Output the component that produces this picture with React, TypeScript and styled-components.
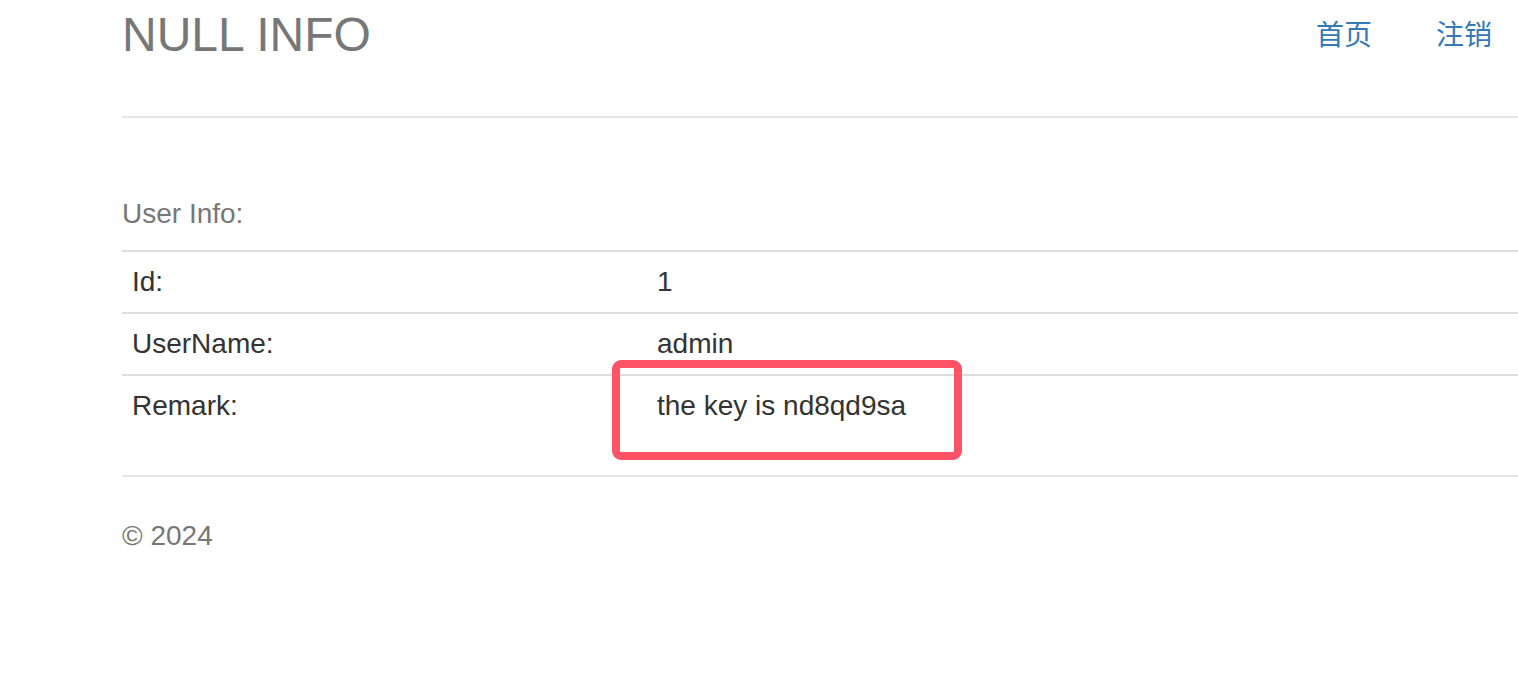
import React from "react";
import styled, { createGlobalStyle } from "styled-components";

const GlobalStyle = createGlobalStyle`
  html, body {
    margin: 0;
    padding: 0;
    background: #ffffff;
  }
  body {
    font-family: "Liberation Sans", Arial, "Noto Sans CJK SC", sans-serif;
    font-size: 28px;
    color: #333333;
  }
  * { box-sizing: border-box; }
`;

const Page = styled.div`
  position: relative;
  padding-left: 122px;
  width: 1518px;
`;

const Header = styled.header`
  display: flex;
  justify-content: space-between;
  align-items: flex-start;
  height: 118px;
  border-bottom: 2px solid #e5e5e5;
`;

const Title = styled.h1`
  margin: 0;
  padding-top: 7px;
  font-size: 48px;
  line-height: 56px;
  font-weight: 400;
  color: #777777;
`;

const Nav = styled.nav`
  display: flex;
  gap: 64px;
  padding-top: 16px;
  padding-right: 26px;
`;

const NavLink = styled.a`
  font-size: 28px;
  line-height: 40px;
  color: #337ab7;
  text-decoration: none;
  cursor: pointer;
`;

const Main = styled.main`
  padding-top: 80px;
`;

const SectionTitle = styled.p`
  margin: 0 0 20px;
  font-size: 28px;
  line-height: 32px;
  color: #777777;
`;

const Table = styled.table`
  width: 100%;
  border-collapse: collapse;
  margin-bottom: 39px;
`;

const Row = styled.tr`
  border-top: 2px solid #dddddd;
`;

const Cell = styled.td<{ $label?: boolean }>`
  padding: 14px 10px;
  line-height: 32px;
  font-size: 28px;
  color: #333333;
  vertical-align: top;
  text-align: left;
  width: ${(p) => (p.$label ? "525px" : "auto")};
`;

const Footer = styled.footer`
  border-top: 2px solid #e5e5e5;
  padding-top: 43px;
  font-size: 28px;
  line-height: 32px;
  color: #777777;
`;

const Highlight = styled.div`
  position: absolute;
  left: 612px;
  top: 360px;
  width: 350px;
  height: 100px;
  border: 8px solid #fe5266;
  border-radius: 9px;
  pointer-events: none;
`;

const rows = [
  { label: "Id:", value: "1" },
  { label: "UserName:", value: "admin" },
  { label: "Remark:", value: "the key is nd8qd9sa" },
];

export default function App() {
  return (
    <>
      <GlobalStyle />
      <Page>
        <Header>
          <Title>NULL INFO</Title>
          <Nav>
            <NavLink>首页</NavLink>
            <NavLink>注销</NavLink>
          </Nav>
        </Header>
        <Main>
          <SectionTitle>User Info:</SectionTitle>
          <Table>
            <tbody>
              {rows.map((r) => (
                <Row key={r.label}>
                  <Cell $label>{r.label}</Cell>
                  <Cell>{r.value}</Cell>
                </Row>
              ))}
            </tbody>
          </Table>
        </Main>
        <Footer>© 2024</Footer>
        <Highlight />
      </Page>
    </>
  );
}
